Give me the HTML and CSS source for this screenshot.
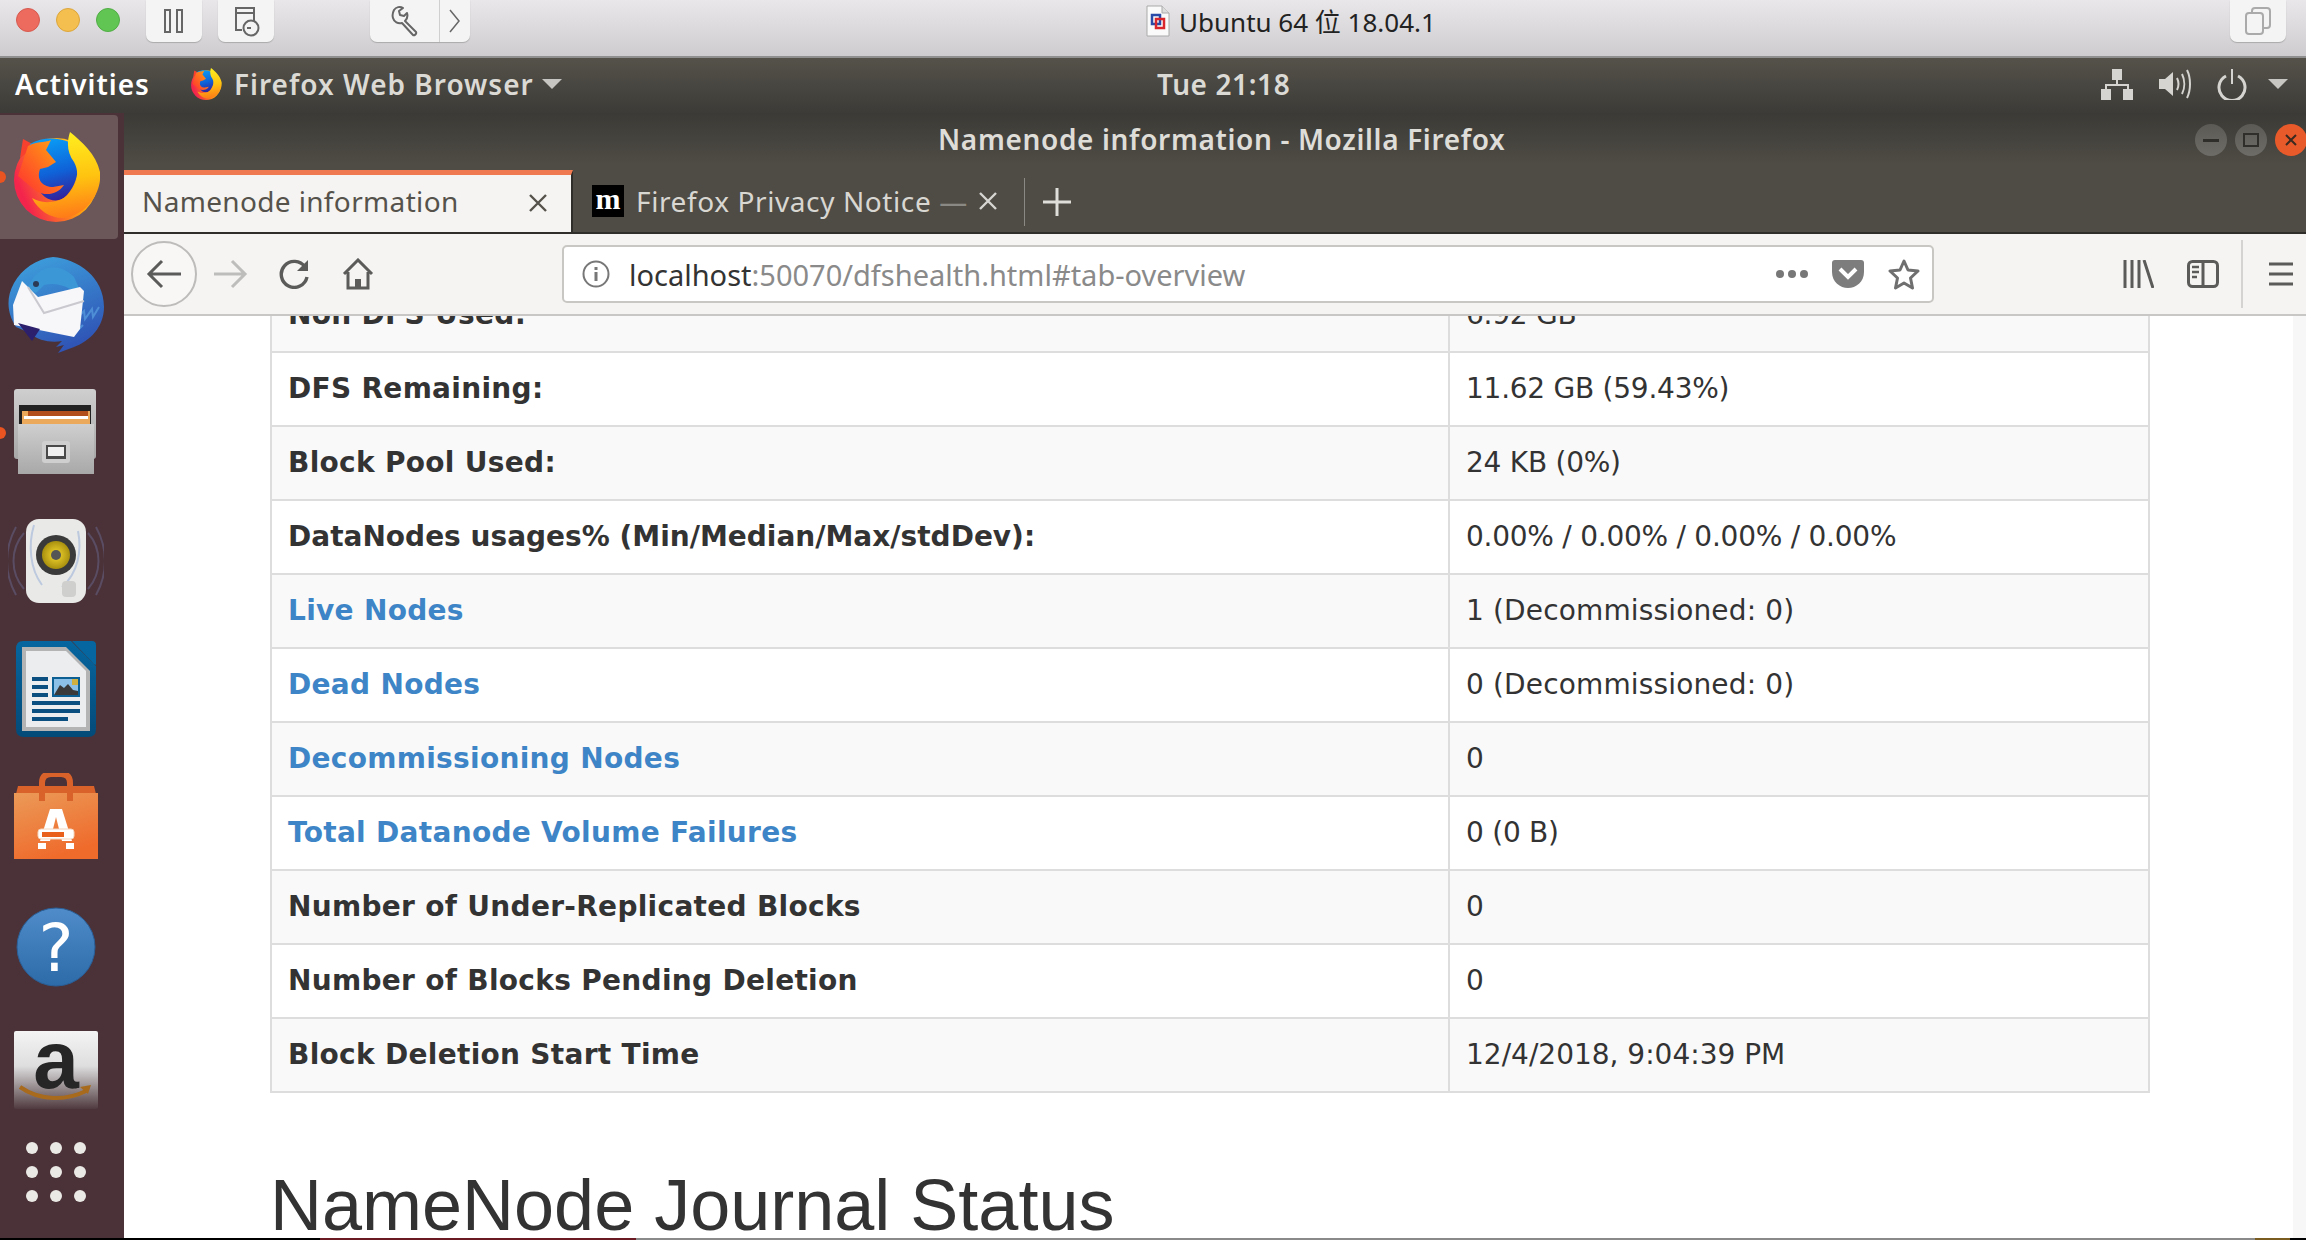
FILE: index.html
```html
<!DOCTYPE html>
<html lang="en">
<head>
<meta charset="utf-8">
<title>Namenode information - Mozilla Firefox</title>
<link rel="stylesheet" href="styles.css">
</head>
<body>
<svg class="defs" width="0" height="0" aria-hidden="true">
  <defs>
    <linearGradient id="ffBase" x1="0.95" y1="0.15" x2="0.05" y2="0.55"><stop offset="0" stop-color="#ffe226"/><stop offset="0.45" stop-color="#ffa00f"/><stop offset="1" stop-color="#f4254c"/></linearGradient>
    <linearGradient id="ffBlue" x1="0.4" y1="0" x2="0.6" y2="1"><stop offset="0" stop-color="#0a9cf5"/><stop offset="0.55" stop-color="#0f62d8"/><stop offset="1" stop-color="#33209a"/></linearGradient>
    <linearGradient id="ffFox" x1="0.9" y1="0.1" x2="0.1" y2="0.9"><stop offset="0" stop-color="#ff9d12"/><stop offset="1" stop-color="#ff3a2e"/></linearGradient>
    <linearGradient id="ffFlame" x1="0.4" y1="0" x2="0.5" y2="1"><stop offset="0" stop-color="#fff020"/><stop offset="0.55" stop-color="#ffc310"/><stop offset="1" stop-color="#ff7a18"/></linearGradient>
    <linearGradient id="tbBlue" x1="0.3" y1="0" x2="0.7" y2="1"><stop offset="0" stop-color="#3d9ddb"/><stop offset="1" stop-color="#2e4fb3"/></linearGradient>
    <linearGradient id="steel" x1="0" y1="0" x2="0" y2="1"><stop offset="0" stop-color="#cfcfcf"/><stop offset="1" stop-color="#a8a8a8"/></linearGradient>
    <linearGradient id="bag" x1="0" y1="0" x2="0.4" y2="1"><stop offset="0" stop-color="#eb9a58"/><stop offset="1" stop-color="#ef6b2c"/></linearGradient>
    <linearGradient id="helpBlue" x1="0" y1="0" x2="0" y2="1"><stop offset="0" stop-color="#4f8cc9"/><stop offset="1" stop-color="#2c6aa8"/></linearGradient>
    <linearGradient id="amz" x1="0" y1="0" x2="0" y2="1"><stop offset="0" stop-color="#f4f4f4"/><stop offset="0.45" stop-color="#dedede"/><stop offset="1" stop-color="#4f3a3f"/></linearGradient>
    <linearGradient id="writerBlue" x1="0" y1="0" x2="0" y2="1"><stop offset="0" stop-color="#06669f"/><stop offset="1" stop-color="#034a78"/></linearGradient>
    <radialGradient id="cone"><stop offset="0.2" stop-color="#e8cb2a"/><stop offset="1" stop-color="#a8900f"/></radialGradient>
    <symbol id="firefox" viewBox="0 0 88 90">
      <circle cx="44" cy="48" r="42" fill="url(#ffBase)"/>
      <path d="M11 7 8 26 24 14Z" fill="#f8402f"/>
      <path d="M18 12C30 5 45 5 57 10 69 24 70 50 52 66 42 72 30 66 26 56 22 40 16 24 18 12Z" fill="url(#ffBlue)"/>
      <path d="M16 14C24 9 32 11 39 8L34 18 44 30 36 35 28 37C24 48 31 55 41 55L52 53C46 62 34 65 24 59L6 44Z" fill="url(#ffFox)"/>
      <path d="M58 0C54 12 56 22 62 30 70 44 62 62 48 68 34 72 28 70 20 66 28 82 46 90 60 84 78 78 90 58 88 40 84 22 70 10 58 0Z" fill="url(#ffFlame)"/>
    </symbol>
  </defs>
</svg>

<div class="screen">
  <header class="macbar">
    <div class="lights">
      <span class="light light-red"></span>
      <span class="light light-yellow"></span>
      <span class="light light-green"></span>
    </div>
    <div class="macbtn macbtn-pause">
      <svg width="22" height="26" viewBox="0 0 22 26"><path d="M2 2h5v22H2zM14 2h5v22h-5z" fill="none" stroke="#666" stroke-width="2"/></svg>
    </div>
    <div class="macbtn macbtn-snap">
      <svg width="30" height="32" viewBox="0 0 30 32"><path d="M5 21V3h18v14M5 21v4h6" fill="none" stroke="#666" stroke-width="2"/><path d="M5 8h18" stroke="#666" stroke-width="2"/><circle cx="20" cy="23" r="7.5" fill="#f4f4f4" stroke="#666" stroke-width="2"/><path d="M20 23h-4" stroke="#666" stroke-width="2"/></svg>
    </div>
    <div class="macbtn macbtn-tool">
      <span class="tool-main">
        <svg width="30" height="32" viewBox="0 0 30 32"><path d="M4 5c2-3 6-4 9-2l-4 3 1 4 4 1 3-3c1 3 0 6-2 8l11 11c1 2-2 4-3 3L12 18c-4 1-8-1-9-5-1-3 0-6 1-8z" fill="none" stroke="#666" stroke-width="2" stroke-linejoin="round"/></svg>
      </span>
      <span class="tool-more">
        <svg width="12" height="26" viewBox="0 0 12 26"><path d="M1 2l9 11-9 11" fill="none" stroke="#666" stroke-width="1.5"/></svg>
      </span>
    </div>
    <div class="mactitle">
      <svg width="24" height="32" viewBox="0 0 24 32"><path d="M1 1h15l7 7v23H1z" fill="#fafafa" stroke="#aaa"/><path d="M16 1v7h7" fill="#ddd" stroke="#aaa"/><rect x="6" y="10" width="8" height="9" fill="none" stroke="#2a4aa8" stroke-width="2.5"/><rect x="10" y="14" width="8" height="9" fill="none" stroke="#d8262c" stroke-width="2.5"/></svg>
      <span>Ubuntu 64 位 18.04.1</span>
    </div>
    <div class="macbtn macbtn-win">
      <svg width="26" height="28" viewBox="0 0 26 28"><rect x="1" y="6" width="17" height="21" rx="3" fill="none" stroke="#aaa" stroke-width="2"/><path d="M7 6V4q0-3 3-3h12q3 0 3 3v14q0 3-3 3h-4" fill="none" stroke="#aaa" stroke-width="2"/></svg>
    </div>
  </header>

  <div class="topbar">
    <div class="topbar-left">
      <span class="activities">Activities</span>
      <svg class="top-ff" width="32" height="32"><use href="#firefox"/></svg>
      <span class="appname">Firefox Web Browser</span>
      <span class="caret"></span>
    </div>
    <div class="clock">Tue 21:18</div>
    <div class="tray">
      <svg width="32" height="32" viewBox="0 0 32 32"><path d="M11 1h10v11h-10zM0 21h10v11H0zM22 21h10v11H22z" fill="#d6d4d0"/><path d="M16 12v5M5 21v-4h22v4" fill="none" stroke="#d6d4d0" stroke-width="2"/></svg>
      <svg width="32" height="30" viewBox="0 0 32 30"><path d="M0 10h6l8-7v24l-8-7H0z" fill="#d6d4d0"/><path d="M18 9c2 4 2 8 0 12M23 5c3 6 3 14 0 20M28 1c4 8 4 20 0 28" fill="none" stroke="#d6d4d0" stroke-width="2"/></svg>
      <svg width="30" height="31" viewBox="0 0 30 31"><path d="M9 7a13 13 0 1 0 12 0" fill="none" stroke="#d6d4d0" stroke-width="3"/><path d="M15 0v15" stroke="#d6d4d0" stroke-width="2"/></svg>
      <span class="caret caret-tray"></span>
    </div>
  </div>

  <div class="desktop">
    <nav class="dock">
      <div class="dock-item dock-item-active"><span class="run-dot"></span><svg width="88" height="90"><use href="#firefox"/></svg></div>
      <div class="dock-item">
        <svg width="96" height="96" viewBox="0 0 96 96">
          <path d="M45 0C70 2 96 20 96 50c0 20-14 34-30 40l-16 6 6-8-8 2 6-6c-10 2-24 0-32-8L8 70C0 58-3 42 6 26 14 12 28 2 45 0z" fill="url(#tbBlue)"/>
          <path d="M68 62l8-8 1 8 7-10 1 8 6-10M58 74l8-4 1 6 8-8" fill="none" stroke="#4e8ed6" stroke-width="2"/>
          <path d="M20 32C26 8 52 4 66 20l10 22c-10-10-26-18-40-14l-8 8z" fill="#3b97d6"/>
          <path d="M14 24l16 16 42-10 4 4-4 38-6 8L6 68 5 48z" fill="#f7f7fa"/>
          <path d="M20 30l16 26 40-12" fill="none" stroke="#c9c9cf" stroke-width="2"/>
          <circle cx="28" cy="27" r="3" fill="#2b3a55"/>
          <path d="M10 66l14 18 8-12z" fill="#2c1f6b"/>
        </svg>
      </div>
      <div class="dock-item">
        <span class="run-dot"></span>
        <svg width="84" height="88" viewBox="0 0 84 88">
          <rect x="0" y="0" width="82" height="70" rx="3" fill="url(#steel)"/>
          <rect x="5" y="16" width="72" height="22" fill="#222"/>
          <rect x="8" y="22" width="68" height="16" fill="#eba95c"/>
          <rect x="14" y="22" width="60" height="5" fill="#b24e1a"/>
          <rect x="10" y="27" width="64" height="3" fill="#fff"/>
          <rect x="4" y="35" width="76" height="50" fill="url(#steel)"/>
          <rect x="28" y="52" width="28" height="22" rx="3" fill="#cfcfcf"/>
          <rect x="32" y="56" width="20" height="14" fill="#4a4a4a"/>
          <rect x="34" y="58" width="16" height="9" fill="#f0f0f0"/>
        </svg>
      </div>
      <div class="dock-item">
        <svg width="96" height="84" viewBox="0 0 96 84">
          <g fill="none" stroke="#5a4c62" stroke-width="2"><path d="M16 14c-14 16-14 40 0 56M8 8c-12 22-12 46 0 68M80 14c14 16 14 40 0 56M88 8c12 22 12 46 0 68"/></g>
          <rect x="18" y="0" width="60" height="84" rx="13" fill="#e9e9e7"/>
          <path d="M26 6c-6 20-4 44 8 60M70 12c4 20 0 42-16 56" fill="none" stroke="#bcc9de" stroke-width="2"/>
          <circle cx="48" cy="36" r="20" fill="#3a3a3a"/>
          <circle cx="48" cy="36" r="14" fill="url(#cone)"/>
          <circle cx="48" cy="36" r="5" fill="#555"/>
          <rect x="54" y="62" width="14" height="16" rx="4" fill="#cfcfcd"/>
        </svg>
      </div>
      <div class="dock-item">
        <svg width="80" height="96" viewBox="0 0 80 96">
          <path d="M7 0h48l25 25v63q0 8-8 8H8q-8 0-8-8V8q0-8 7-8z" fill="url(#writerBlue)"/>
          <path d="M56 0h20q4 0 4 4v20q-2 0-4-3z" fill="#06669f"/>
          <path d="M6 6h44l24 24v60H6z" fill="#b4b4b4"/>
          <path d="M10 10h40l20 20v56H10z" fill="#ecedef"/>
          <path d="M16 36h16v4H16zM16 44h16v4H16zM16 52h16v4H16zM16 60h48v4H16zM16 68h48v4H16zM16 76h36v4H16z" fill="#0b4f80"/>
          <rect x="36" y="36" width="28" height="20" fill="#0b5f93"/>
          <rect x="38" y="38" width="24" height="16" fill="#8cc0e6"/>
          <path d="M38 54l6-10 4 3 4-4 5 6 5 1v4z" fill="#3a3a3a"/>
          <rect x="56" y="38" width="6" height="6" fill="#d0b040"/>
        </svg>
      </div>
      <div class="dock-item">
        <svg width="84" height="88" viewBox="0 0 84 88">
          <path d="M28 22V10q0-9 9-9h10q9 0 9 9v12" fill="none" stroke="#d9622b" stroke-width="6"/>
          <path d="M4 13h76l4 16H0z" fill="#d9622b"/>
          <rect x="0" y="20" width="84" height="66" fill="url(#bag)"/>
          <path d="M28 20v8M56 20v8" stroke="#d9622b" stroke-width="6"/>
          <path d="M36 36h12l10 32h-10l-6-24-6 24H26z" fill="#fff"/>
          <rect x="24" y="56" width="36" height="10" rx="3" fill="#fff" stroke="#f3d4bd"/>
          <rect x="28" y="59" width="22" height="5" fill="#e9601c"/>
          <path d="M24 70h8v6h-8zM52 70h8v6h-8z" fill="#fff"/>
        </svg>
      </div>
      <div class="dock-item dock-item-help">
        <svg class="text-icon" width="80" height="80" viewBox="0 0 80 80">
          <circle cx="40" cy="40" r="39" fill="url(#helpBlue)" stroke="#2a5f98"/>
          <text x="40" y="64" class="help-mark">?</text>
        </svg>
      </div>
      <div class="dock-item dock-item-amazon">
        <svg class="text-icon" width="84" height="78" viewBox="0 0 84 78">
          <rect width="84" height="78" rx="2" fill="url(#amz)"/>
          <text x="42" y="57" class="amazon-mark">a</text>
          <path d="M6 56c20 14 46 14 66 4" fill="none" stroke="#a86a1c" stroke-width="4"/>
          <path d="M66 56l11-2-3 9z" fill="#a86a1c"/>
        </svg>
      </div>
      <div class="dock-apps">
        <span></span><span></span><span></span><span></span><span></span><span></span><span></span><span></span><span></span>
      </div>
    </nav>

    <main class="window">
      <div class="wintitle">
        <div class="wintitle-text">Namenode information - Mozilla Firefox</div>
        <div class="winbtns">
          <span class="winbtn"><svg width="16" height="4"><rect width="16" height="3" y="1" fill="#2f2e2a"/></svg></span>
          <span class="winbtn"><svg width="16" height="14"><rect x="1" y="1" width="14" height="12" fill="none" stroke="#2f2e2a" stroke-width="2"/></svg></span>
          <span class="winbtn winbtn-close"><svg width="14" height="14"><path d="M2 2l10 10M12 2L2 12" stroke="#3a2a20" stroke-width="2"/></svg></span>
        </div>
      </div>

      <div class="tabbar">
        <div class="tab tab-active">
          <span class="tab-label">Namenode information</span>
          <svg class="tab-close" width="20" height="20" viewBox="0 0 20 20"><path d="M2 2l16 16M18 2L2 18" stroke="#55524c" stroke-width="2.4"/></svg>
        </div>
        <div class="tab tab-idle">
          <span class="favicon">m</span>
          <span class="tab-label">Firefox Privacy Notice<span class="tab-fade"> —</span></span>
          <svg class="tab-close" width="20" height="20" viewBox="0 0 20 20"><path d="M2 2l16 16M18 2L2 18" stroke="#d8d6d2" stroke-width="2.4"/></svg>
        </div>
        <div class="tab-new">
          <svg width="30" height="30" viewBox="0 0 30 30"><path d="M15 1v28M1 15h28" stroke="#e0ded9" stroke-width="3"/></svg>
        </div>
      </div>

      <div class="navbar">
        <span class="nav-back">
          <svg width="36" height="30" viewBox="0 0 36 30"><path d="M35 15H3M16 2L3 15l13 13" fill="none" stroke="#5b5b5a" stroke-width="3"/></svg>
        </span>
        <svg class="nav-forward" width="34" height="30" viewBox="0 0 34 30"><path d="M0 15h31M18 2l13 13-13 13" fill="none" stroke="#bdbdbb" stroke-width="3"/></svg>
        <svg class="nav-reload" width="32" height="30" viewBox="0 0 32 30"><path d="M27 8A13 13 0 1 0 29 18" fill="none" stroke="#5b5b5a" stroke-width="3.4"/><path d="M30 1v11H19z" fill="#5b5b5a"/></svg>
        <svg class="nav-home" width="32" height="32" viewBox="0 0 32 32"><path d="M2 16L16 2l14 14M6 14v16h20V14" fill="none" stroke="#5b5b5a" stroke-width="3"/><path d="M13 30v-9h6v9" fill="#5b5b5a"/></svg>
        <div class="urlbar">
          <svg class="url-info" width="28" height="28" viewBox="0 0 28 28"><circle cx="14" cy="14" r="12.5" fill="none" stroke="#777" stroke-width="2"/><path d="M14 12v9M14 7v3" stroke="#777" stroke-width="3"/></svg>
          <span class="url-text"><span class="url-host">localhost</span>:50070/dfshealth.html#tab-overview</span>
          <svg class="url-dots" width="32" height="8" viewBox="0 0 32 8"><circle cx="4" cy="4" r="4" fill="#777"/><circle cx="16" cy="4" r="4" fill="#777"/><circle cx="28" cy="4" r="4" fill="#777"/></svg>
          <svg class="url-pocket" width="32" height="28" viewBox="0 0 32 28"><path d="M3 0h26q3 0 3 3v9C32 22 24 28 16 28S0 22 0 12V3q0-3 3-3z" fill="#7d7d7d"/><path d="M8 9l8 8 8-8" fill="none" stroke="#fff" stroke-width="4"/></svg>
          <svg class="url-star" width="32" height="32" viewBox="0 0 32 32"><path d="M16 3l4 9 10 1-7.500 7 2 10-8.500-5-8.500 5 2-10L2 13l10-1z" fill="none" stroke="#6f6f6f" stroke-width="3" stroke-linejoin="round"/></svg>
        </div>
        <svg class="nav-lib" width="31" height="28" viewBox="0 0 31 28"><path d="M2 0v28M9 0v28M16 0v28M21 0l9 28" fill="none" stroke="#5b5b5a" stroke-width="3"/></svg>
        <svg class="nav-side" width="32" height="28" viewBox="0 0 32 28"><rect x="1.500" y="1.500" width="29" height="25" rx="4" fill="none" stroke="#5b5b5a" stroke-width="3"/><path d="M16 2v24" stroke="#5b5b5a" stroke-width="3"/><path d="M5 7h7M5 12h7M5 17h5" stroke="#5b5b5a" stroke-width="2.400"/></svg>
        <span class="nav-sep"></span>
        <svg class="nav-menu" width="24" height="24" viewBox="0 0 24 24"><path d="M0 2h24M0 12h24M0 22h24" stroke="#5b5b5a" stroke-width="3.200"/></svg>
      </div>

      <div class="page">
        <div class="page-content">
          <table class="overview">
            <colgroup><col class="col-key"><col></colgroup>
            <tbody>
              <tr><th>Non DFS Used:</th><td>6.92 GB</td></tr>
              <tr><th>DFS Remaining:</th><td>11.62 GB (59.43%)</td></tr>
              <tr><th>Block Pool Used:</th><td>24 KB (0%)</td></tr>
              <tr><th class="tight">DataNodes usages% (Min/Median/Max/stdDev):</th><td>0.00% / 0.00% / 0.00% / 0.00%</td></tr>
              <tr><th><a href="#live">Live Nodes</a></th><td class="wide">1 (Decommissioned: 0)</td></tr>
              <tr><th><a href="#dead">Dead Nodes</a></th><td class="wide">0 (Decommissioned: 0)</td></tr>
              <tr><th><a href="#decom">Decommissioning Nodes</a></th><td>0</td></tr>
              <tr><th><a href="#fail">Total Datanode Volume Failures</a></th><td>0 (0 B)</td></tr>
              <tr><th>Number of Under-Replicated Blocks</th><td>0</td></tr>
              <tr><th>Number of Blocks Pending Deletion</th><td>0</td></tr>
              <tr><th>Block Deletion Start Time</th><td class="plain">12/4/2018, 9:04:39 PM</td></tr>
            </tbody>
          </table>
          <h1 class="section-title">NameNode Journal Status</h1>
        </div>
        <div class="scrolltrack"></div>
      </div>
    </main>
  </div>

  <div class="hoststrip">
    <span class="strip-a"></span><span class="strip-b"></span><span class="strip-c"></span><span class="strip-d"></span><span class="strip-e"></span>
  </div>
</div>
</body>
</html>
```

FILE: styles.css
```css
* { box-sizing: border-box; }
html, body { margin: 0; padding: 0; height: 100%; overflow: hidden; background: #000; }
.defs { position: absolute; }

.screen { width: 2306px; height: 1240px; display: flex; flex-direction: column; overflow: hidden; font-family: "Noto Sans", "Noto Sans CJK SC", sans-serif; }

/* mac host bar */
.macbar { flex: 0 0 58px; display: flex; align-items: flex-start; background: linear-gradient(#e9e7e9, #cecccf); border-bottom: 2px solid #8f8f8f; }
.lights { display: flex; gap: 16px; padding: 8px 0 0 16px; width: 146px; }
.light { width: 24px; height: 24px; border-radius: 50%; }
.light-red { background: #ec6a5e; border: 1px solid #d65a50; }
.light-yellow { background: #f4bf4f; border: 1px solid #dca63c; }
.light-green { background: #61c554; border: 1px solid #50ad45; }
.macbtn { height: 42px; background: #f4f4f4; border-radius: 0 0 7px 7px; box-shadow: 0 1px 1px #aaa; display: flex; align-items: center; justify-content: center; }
.macbtn-pause { width: 56px; }
.macbtn-snap { width: 56px; margin-left: 16px; }
.macbtn-tool { width: 100px; margin-left: 96px; justify-content: flex-start; }
.tool-main { width: 70px; height: 100%; display: flex; align-items: center; justify-content: center; border-right: 1px solid #cfcfcf; }
.tool-more { flex: 1; display: flex; align-items: center; justify-content: center; }
.mactitle { display: flex; align-items: center; gap: 9px; margin-left: 676px; height: 42px; font-size: 26px; color: #222; width: 1084px; }
.macbtn-win { width: 56px; }

/* ubuntu top bar */
.topbar { flex: 0 0 55px; display: flex; align-items: center; padding-bottom: 3px; color: #dcdad5; background: linear-gradient(#55524a, #3c3b37); font-weight: 600; font-size: 28px; letter-spacing: 1px; }
.topbar-left { width: 1157px; display: flex; align-items: center; padding-left: 15px; }
.activities { color: #fff; width: 175px; }
.top-ff { margin-right: 12px; }
.appname { width: 308px; white-space: nowrap; }
.caret { display: inline-block; border: 10px solid transparent; border-top: 10px solid #c8c6c2; border-bottom: 0; }
.caret-tray { margin-left: -5px; }
.clock { width: 140px; white-space: nowrap; letter-spacing: 0.6px; }
.tray { flex: 1; display: flex; align-items: center; justify-content: flex-end; gap: 26px; padding-right: 18px; }

/* desktop */
.desktop { flex: 1; display: flex; min-height: 0; }
.dock { flex: 0 0 124px; background: #4a3238; display: flex; flex-direction: column; }
.dock-item { position: relative; flex: none; height: 128px; display: flex; align-items: center; justify-content: center; padding-right: 12px; }
.dock-item-active::before { content: ""; position: absolute; left: 0; top: 2px; width: 118px; height: 124px; background: #6b565a; border-radius: 0 4px 4px 0; }
.dock-item svg { position: relative; }
.dock-item-help { padding-top: 4px; }
.dock-item-amazon { height: 122px; }
.text-icon { overflow: visible; }
.run-dot { position: absolute; left: 0; top: 58px; width: 6px; height: 12px; background: #e95420; border-radius: 0 6px 6px 0; z-index: 1; }
.help-mark { font: normal 66px "DejaVu Sans", sans-serif; fill: #fff; text-anchor: middle; }
.amazon-mark { font: bold 82px "Liberation Sans", sans-serif; fill: #262626; text-anchor: middle; }
.dock-apps { display: grid; grid-template-columns: repeat(3, 12px); grid-auto-rows: 12px; gap: 12px; padding: 11px 0 0 26px; }
.dock-apps span { border-radius: 50%; background: #ebe9e6; }

/* firefox window */
.window { flex: 1; min-width: 0; display: flex; flex-direction: column; background: #4f4c45; }
.wintitle { flex: 0 0 57px; display: grid; grid-template-columns: 814px auto 1fr; align-items: center; padding-bottom: 3px; background: linear-gradient(#3b3a36, #4f4c45 90%); color: #dfddd8; font-size: 28px; font-weight: 600; letter-spacing: 0.65px; }
.wintitle-text { white-space: nowrap; grid-column: 2; margin-top: -2px; }
.winbtns { grid-column: 3; justify-self: end; display: flex; gap: 8px; margin-right: -1px; }
.winbtn { width: 32px; height: 32px; border-radius: 50%; background: linear-gradient(#5b5a55, #6e6c66); display: flex; align-items: center; justify-content: center; }
.winbtn-close { background: #e95a2a; }

.tabbar { flex: 0 0 64px; display: flex; align-items: stretch; border-bottom: 2px solid #2f2e2b; font-size: 28px; color: #d9d7d2; }
.tab { position: relative; display: flex; align-items: center; white-space: nowrap; }
.tab-close { margin-left: auto; flex: none; }
.tab-active { width: 449px; background: #f5f4f2; color: #55524c; border-top: 5px solid #ef7a52; border-right: 2px solid #2f2e2b; padding: 0 23px 5px 18px; letter-spacing: 0.35px; }
.tab-active .tab-close { margin-top: 3px; }
.tab-idle { width: 451px; padding: 0 26px 0 19px; letter-spacing: 0.6px; }
.favicon { width: 32px; height: 32px; background: #000; color: #fff; font: bold 30px/28px "Liberation Serif", serif; text-align: center; margin-right: 12px; letter-spacing: 0; }
.tab-fade { color: #8b8983; }
.tab-new { display: flex; align-items: center; border-left: 1px solid #8b8983; margin: 8px 0 6px; padding-left: 17px; }

.navbar { flex: 0 0 82px; display: flex; align-items: center; background: #f5f4f2; border-bottom: 2px solid #c9c7c5; padding-left: 7px; }
.nav-back { width: 66px; height: 66px; border: 2px solid #bdbcba; border-radius: 50%; display: flex; align-items: center; justify-content: center; background: #f8f7f6; flex: none; }
.nav-forward { margin-left: 17px; flex: none; }
.nav-reload { margin-left: 30px; flex: none; }
.nav-home { margin-left: 32px; flex: none; }
.urlbar { flex: 0 0 1372px; margin-left: 188px; height: 58px; background: #fff; border: 2px solid #c9c7c3; border-radius: 5px; display: flex; align-items: center; padding-left: 18px; }
.url-text { margin-left: 19px; width: 1147px; font-size: 29px; color: #8a8a8a; white-space: nowrap; }
.url-host { color: #333; }
.url-info, .url-dots, .url-pocket, .url-star { flex: none; }
.url-pocket { margin-left: 24px; }
.url-star { margin-left: 24px; }
.nav-lib { margin-left: 189px; flex: none; }
.nav-side { margin-left: 33px; flex: none; }
.nav-sep { width: 2px; height: 68px; background: #d4d3d1; margin-left: 22px; flex: none; }
.nav-menu { margin-left: 26px; flex: none; }

/* page */
.page { flex: 1; min-height: 0; display: flex; background: #fff; }
.page-content { flex: 1; min-width: 0; overflow: hidden; padding-left: 146px; color: #333; font-family: "DejaVu Sans", sans-serif; font-size: 28px; }
.scrolltrack { flex: 0 0 13px; background: #f7f7f7; }
.overview { width: 1880px; table-layout: fixed; border-collapse: collapse; margin-top: -39px; }
.col-key { width: 1178px; }
.overview th, .overview td { height: 74px; padding: 16px; border: 2px solid #ddd; text-align: left; line-height: 40px; vertical-align: middle; white-space: nowrap; }
.overview th { font-weight: bold; letter-spacing: 0.3px; }
.overview th.tight { letter-spacing: 0; }
.overview td { font-weight: normal; letter-spacing: -0.25px; }
.overview td.wide { letter-spacing: 0.15px; }
.overview td.plain { letter-spacing: 0; }
.overview tr:nth-child(odd) { background: #f9f9f9; }
.overview a { color: #3d85c6; text-decoration: none; }
.section-title { margin: 73px 0 0; font: normal 72px/79px "Liberation Sans", sans-serif; color: #333; }

/* host strip */
.hoststrip { flex: 0 0 2px; display: flex; }
.hoststrip span { display: block; height: 100%; }
.strip-a { width: 320px; background: #000; }
.strip-b { width: 316px; background: #6a1a22; }
.strip-c { width: 1619px; background: #8a8a8a; }
.strip-d { width: 35px; background: #7a5c20; }
.strip-e { flex: 1; background: #000; }
```
